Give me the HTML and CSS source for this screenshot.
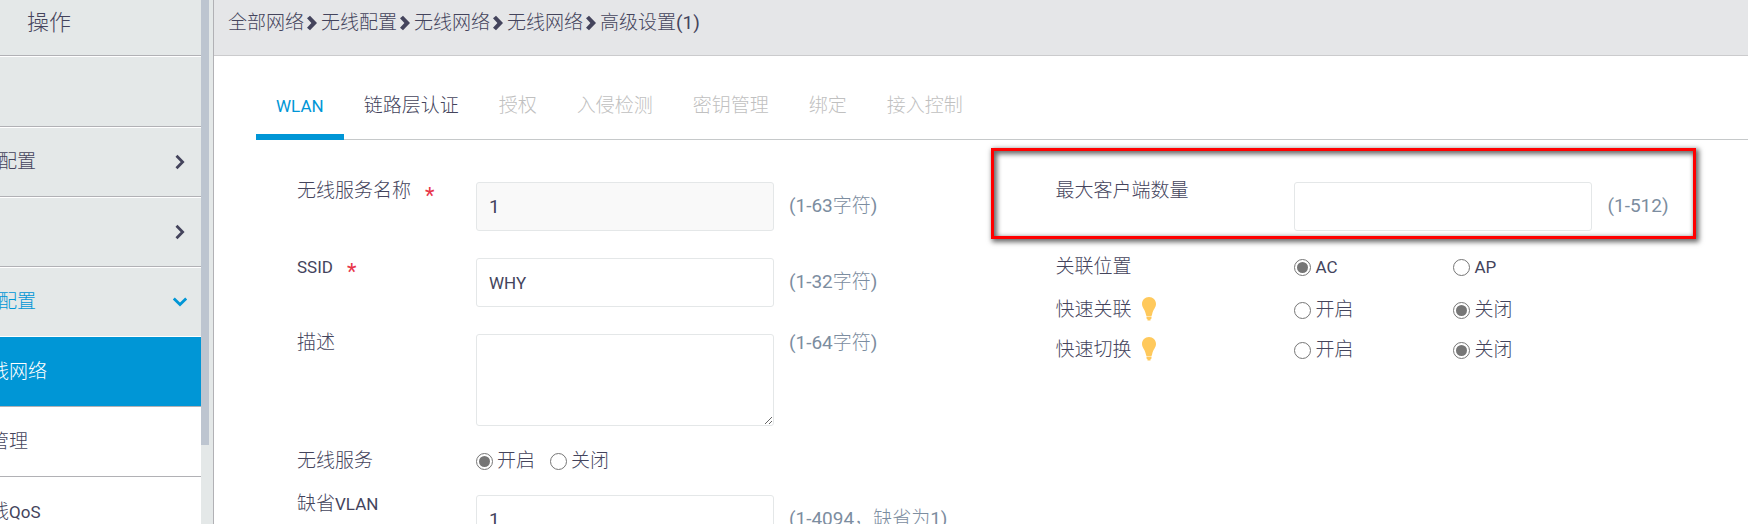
FILE: index.html
```
<!DOCTYPE html>
<html lang="zh-CN">
<head>
    <meta charset="utf-8">
    <title>高级设置</title>
    <link rel="stylesheet" href="styles.css">
</head>
<body>
    <svg class="sprite" aria-hidden="true">
        <symbol id="chevron" viewBox="0 0 10 16">
            <path d="M0 3.200L3 .8L10 8L3 15.200L0 12.800L4.400 8Z" />
        </symbol>
        <symbol id="arrow" viewBox="0 0 10 16">
            <path d="M1.5 1.8L7.6 8L1.5 14.2" fill="none" stroke="currentColor" stroke-width="2.8" />
        </symbol>
        <symbol id="bulb" viewBox="0 0 14 24">
            <path d="M7 0C3 0 0 3 0 7C0 10.500 3 12.500 3.800 17C4 18.200 4.500 19 4.500 19H9.500C9.500 19 10 18.200 10.200 17C11 12.500 14 10.500 14 7C14 3 11 0 7 0Z" />
            <path d="M4.500 19.600H9.500V21.500L8.500 22.300V23.500H5.500V22.300L4.500 21.500Z" />
        </symbol>
    </svg>

    <div class="page">
        <aside class="sidebar">
            <nav class="menu">
                <div class="menu-title">操作</div>
                <div class="menu-item blank"></div>
                <a class="menu-item" href="#">配置<svg class="arrow"><use href="#arrow" /></svg></a>
                <a class="menu-item" href="#"><svg class="arrow"><use href="#arrow" /></svg></a>
                <a class="menu-item open" href="#">配置<svg class="arrow down"><use href="#arrow" /></svg></a>
                <a class="sub-item active" href="#">线网络</a>
                <a class="sub-item" href="#">管理</a>
                <a class="sub-item" href="#">线<span class="latin">QoS</span></a>
            </nav>
            <div class="scroll"><div class="thumb"></div></div>
        </aside>

        <main class="content">
            <nav class="breadcrumb">
                <a href="#">全部网络</a><svg><use href="#chevron" /></svg>
                <a href="#">无线配置</a><svg><use href="#chevron" /></svg>
                <a href="#">无线网络</a><svg><use href="#chevron" /></svg>
                <a href="#">无线网络</a><svg><use href="#chevron" /></svg>
                <span>高级设置(1)</span>
            </nav>

            <div class="tabs">
                <button class="tab active latin">WLAN</button>
                <button class="tab">链路层认证</button>
                <button class="tab" disabled>授权</button>
                <button class="tab" disabled>入侵检测</button>
                <button class="tab" disabled>密钥管理</button>
                <button class="tab" disabled>绑定</button>
                <button class="tab" disabled>接入控制</button>
            </div>

            <form class="form">
                <div class="column">
                    <div class="row">
                        <label class="label" for="service">无线服务名称<span class="required">*</span></label>
                        <input class="field" id="service" type="text" value="1" readonly>
                        <span class="hint">(1-63字符)</span>
                    </div>
                    <div class="row">
                        <label class="label" for="ssid"><span class="latin">SSID</span><span class="required">*</span></label>
                        <input class="field latin" id="ssid" type="text" value="WHY">
                        <span class="hint">(1-32字符)</span>
                    </div>
                    <div class="row tall">
                        <label class="label" for="desc">描述</label>
                        <textarea class="field" id="desc"></textarea>
                        <span class="hint">(1-64字符)</span>
                    </div>
                    <div class="row short">
                        <span class="label">无线服务</span>
                        <div class="radios">
                            <label><input type="radio" name="wireless" checked>开启</label>
                            <label><input type="radio" name="wireless">关闭</label>
                        </div>
                    </div>
                    <div class="row">
                        <label class="label" for="vlan">缺省<span class="latin">VLAN</span></label>
                        <input class="field" id="vlan" type="text" value="1">
                        <span class="hint">(1-4094，缺省为1)</span>
                    </div>
                </div>

                <div class="column right">
                    <div class="row">
                        <label class="label" for="clients">最大客户端数量</label>
                        <input class="field" id="clients" type="text">
                        <span class="hint">(1-512)</span>
                        <div class="highlight"></div>
                    </div>
                    <div class="row short">
                        <span class="label">关联位置</span>
                        <div class="radios">
                            <label class="latin"><input type="radio" name="place" checked>AC</label>
                            <label class="latin"><input type="radio" name="place">AP</label>
                        </div>
                    </div>
                    <div class="row slim">
                        <span class="label">快速关联<svg class="bulb"><use href="#bulb" /></svg></span>
                        <div class="radios">
                            <label><input type="radio" name="assoc">开启</label>
                            <label><input type="radio" name="assoc" checked>关闭</label>
                        </div>
                    </div>
                    <div class="row slim">
                        <span class="label">快速切换<svg class="bulb"><use href="#bulb" /></svg></span>
                        <div class="radios">
                            <label><input type="radio" name="roam">开启</label>
                            <label><input type="radio" name="roam" checked>关闭</label>
                        </div>
                    </div>
                </div>
            </form>
        </main>
    </div>
</body>
</html>
```
FILE: styles.css
```
:root {
    --text: #44445c;
    --blue: #0096d6;
    --panel: #e4e8e8;
    --line: #b1b1b5;
    --hint: #7c8da0;
    --sans: Roboto, "Noto Sans CJK SC Light", "Noto Sans CJK SC", sans-serif;
}

* {
    box-sizing: border-box;
}

body {
    margin: 0;
    overflow: hidden;
    font-family: var(--sans);
    font-size: 19px;
    line-height: 26px;
    color: var(--text);
}

a {
    color: inherit;
    text-decoration: none;
}

button,
input,
textarea {
    font: inherit;
    color: inherit;
}

.latin {
    font-size: 17px;
}

.sprite {
    display: none;
}

.page {
    display: flex;
    height: 100vh;
    overflow: hidden;
}

/* sidebar */
.sidebar {
    display: flex;
    flex: none;
    width: 226px;
    margin-left: -12px;
    background: var(--panel);
    border-right: 1px solid var(--line);
}

.menu {
    flex: 1;
}

.menu-title {
    height: 56px;
    padding: 10px 39px;
    font-size: 22px;
    border-bottom: 1px solid var(--line);
}

.menu-item,
.sub-item {
    display: flex;
    align-items: center;
    justify-content: space-between;
    height: 70px;
    border-bottom: 1px solid var(--line);
}

.menu-item {
    padding: 0 16px 0 10px;
    border-top: 1px solid #fff;
}

.menu-item.blank {
    height: 71px;
}

.menu-item.open {
    color: var(--blue);
    border-bottom-color: #fff;
}

.sub-item {
    padding: 0 2px;
    background: #fff;
    justify-content: flex-start;
}

.sub-item.active {
    color: #fff;
    background: var(--blue);
    font-weight: 500;
}

.arrow {
    width: 10px;
    height: 16px;
    margin-left: auto;
}

.arrow.down {
    transform: rotate(90deg);
}

.scroll {
    width: 12px;
}

.thumb {
    width: 8px;
    height: 85vh;
    background: #bdc5d0;
}

/* content */
.content {
    flex: 1;
    min-width: 0;
}

.breadcrumb {
    display: flex;
    align-items: center;
    height: 56px;
    padding: 0 14px 10px;
    background: #e5e6e8;
    border-bottom: 1px solid #cbcbcd;
}

.breadcrumb svg {
    width: 10px;
    height: 16px;
    margin: 0 4px 0 3px;
    fill: var(--text);
}

.tabs {
    display: flex;
    height: 84px;
    margin-left: 42px;
    border-bottom: 1px solid #c6c9ca;
}

.tab {
    height: 84px;
    padding: 22px 20px 0;
    background: none;
    border: 0;
    border-bottom: 6px solid transparent;
}

.tab.active {
    color: var(--blue);
    border-bottom-color: var(--blue);
}

.tab:disabled {
    color: #c0c0c0;
}

/* form */
.form {
    display: grid;
    grid-template-columns: 23fr 21fr;
    padding: 38px 0 0 83px;
}

.row {
    display: flex;
    position: relative;
    height: 76px;
}

.row.tall {
    height: 118px;
}

.row.short {
    height: 43px;
}

.row.slim {
    height: 40px;
}

.label {
    display: flex;
    flex: none;
    width: 179px;
}

.right .label {
    width: 239px;
}

.required {
    margin-left: 14px;
    padding-top: 5px;
    font-size: 22px;
    color: #e8364a;
}

.field {
    width: 298px;
    height: 49px;
    margin-top: 4px;
    padding: 0 12px;
    background: #fff;
    border: 1px solid #e4e7e8;
    border-radius: 3px;
    outline: none;
}

.field:read-only {
    background: #f9f9f9;
}

textarea.field {
    height: 92px;
}

.hint {
    margin-left: 15px;
    padding-top: 15px;
    color: var(--hint);
    white-space: nowrap;
}

.tall .hint {
    padding-top: 0;
}

.radios {
    display: flex;
    gap: 15px;
}

.radios label {
    display: flex;
    align-items: center;
    height: 26px;
}

.right .radios {
    gap: 0;
}

.right .radios label {
    width: 159px;
}

input[type="radio"] {
    appearance: none;
    width: 17px;
    height: 17px;
    margin: 0 4px 0 0;
    padding: 2px;
    border: 1px solid #767676;
    border-radius: 50%;
    background: #fff content-box;
}

input[type="radio"]:checked {
    background-color: #767676;
}

.bulb {
    width: 14px;
    height: 24px;
    margin-left: 11px;
    fill: #ffc95c;
}

/* red frame drawn over the row */
.highlight {
    position: absolute;
    top: -30px;
    left: -64px;
    width: 705px;
    height: 91px;
    border: 3px solid #f00;
    box-shadow: 2px 2px 5px 1px rgba(0, 0, 0, 0.6), inset 2px 2px 5px 1px rgba(0, 0, 0, 0.6);
    pointer-events: none;
}
```
